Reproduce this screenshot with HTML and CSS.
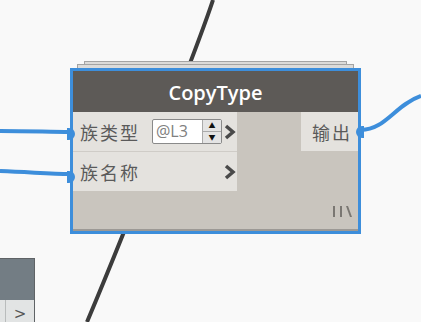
FILE: index.html
```html
<!DOCTYPE html>
<html lang="zh-CN">
<head>
    <meta charset="UTF-8">
    <title>CopyType</title>
    <link rel="stylesheet" href="styles.css">
</head>
<body>
    <div class="canvas">
        <svg class="wires" width="421" height="322" viewBox="0 0 421 322">
            <path d="M213 0 C200 40 130 220 87 322" stroke="#3c3c3c" stroke-width="4" fill="none"/>
            <path d="M0 131 C30 131 50 132 70 132" stroke="#3d8edb" stroke-width="4" fill="none"/>
            <path d="M0 171 C30 172 50 174 70 174" stroke="#3d8edb" stroke-width="4" fill="none"/>
            <path d="M361 130 C385 130 395 105 421 96" stroke="#3d8edb" stroke-width="4" fill="none"/>
        </svg>

        <div class="stack stack-1"></div>
        <div class="stack stack-2"></div>

        <div class="node">
            <div class="node-title">CopyType</div>
            <div class="node-body">
                <div class="inputs">
                    <div class="port-row">
                        <span class="port-name">族类型</span>
                        <div class="spinbox">
                            <span class="spin-value">@L3</span>
                            <div class="spin-buttons">
                                <span class="spin-btn">&#9650;</span>
                                <span class="spin-btn">&#9660;</span>
                            </div>
                        </div>
                        <svg class="chevron" width="12" height="16" viewBox="0 0 12 16">
                            <path d="M2 2 L9 8 L2 14" stroke="#4a4a4a" stroke-width="3.5" fill="none"/>
                        </svg>
                    </div>
                    <div class="port-row">
                        <span class="port-name">族名称</span>
                        <svg class="chevron" width="12" height="16" viewBox="0 0 12 16">
                            <path d="M2 2 L9 8 L2 14" stroke="#4a4a4a" stroke-width="3.5" fill="none"/>
                        </svg>
                    </div>
                </div>
                <div class="outputs">
                    <div class="out-row">输出</div>
                </div>
                <div class="lacing">
                    <span class="lace-bar"></span>
                    <span class="lace-bar"></span>
                    <span class="lace-bar slant"></span>
                </div>
            </div>
            <span class="dot in-1"></span>
            <span class="dot in-2"></span>
            <span class="dot out-1"></span>
        </div>

        <div class="mini-node">
            <div class="mini-head"></div>
            <div class="mini-row">
                <span class="mini-cell"></span>
                <span class="mini-arrow">&gt;</span>
            </div>
        </div>
    </div>
</body>
</html>
```

FILE: styles.css
```css
body {
    margin: 0;
    background: #f9f9f9;
    font-family: "Open Sans", "Noto Sans CJK SC", sans-serif;
}
.canvas {
    position: relative;
    width: 421px;
    height: 322px;
    overflow: hidden;
}
.wires {
    position: absolute;
    left: 0;
    top: 0;
}
.stack {
    position: absolute;
    background: #dcdbd9;
    border: 1px solid #a4a4a4;
    border-bottom: none;
    box-sizing: border-box;
}
.stack-1 {
    left: 84px;
    top: 61px;
    width: 263px;
    height: 4px;
}
.stack-2 {
    left: 77px;
    top: 64px;
    width: 277px;
    height: 5px;
}
.node {
    position: absolute;
    left: 70px;
    top: 68px;
    width: 291px;
    height: 166px;
    box-sizing: border-box;
    border: 3px solid #3d8edb;
    background: #c9c5be;
    display: flex;
    flex-direction: column;
}
.node-title {
    height: 41px;
    background: #5d5a57;
    color: #fff;
    font-weight: 600;
    font-size: 20px;
    display: flex;
    align-items: center;
    justify-content: center;
    padding-top: 2px;
    box-sizing: border-box;
}
.node-body {
    flex: 1;
    display: flex;
    justify-content: space-between;
    position: relative;
    border-bottom: 2px solid #9c9995;
}
.inputs {
    width: 164px;
    align-self: flex-start;
    background: #e4e2de;
}
.port-row {
    height: 39px;
    display: flex;
    align-items: center;
    padding-left: 7px;
    border-bottom: 1px solid #cfccc7;
    font-family: "Noto Sans CJK SC", sans-serif;
}
.port-row:last-child {
    border-bottom: none;
}
.port-name {
    font-size: 18px;
    color: #5a5a5a;
    letter-spacing: 2px;
}
.chevron {
    margin-left: auto;
    margin-right: 1px;
}
.spinbox {
    margin-left: 12px;
    width: 70px;
    height: 25px;
    box-sizing: border-box;
    border: 1px solid #8a8a8a;
    border-radius: 2px;
    background: #fff;
    display: flex;
}
.spin-value {
    flex: 1;
    font-family: "Open Sans", sans-serif;
    font-size: 16px;
    color: #808080;
    line-height: 23px;
    padding-left: 3px;
}
.spin-buttons {
    width: 18px;
    display: flex;
    flex-direction: column;
    border-left: 1px solid #aaa;
}
.spin-btn {
    flex: 1;
    background: #e4e4e4;
    font-size: 7px;
    line-height: 11px;
    text-align: center;
    color: #111;
}
.spin-btn + .spin-btn {
    border-top: 1px solid #aaa;
}
.outputs {
    width: 57px;
    align-self: flex-start;
}
.out-row {
    height: 39px;
    background: #e4e2de;
    font-family: "Noto Sans CJK SC", sans-serif;
    font-size: 18px;
    color: #5a5a5a;
    display: flex;
    align-items: center;
    justify-content: flex-end;
    padding-right: 6px;
    letter-spacing: 2px;
}
.lacing {
    position: absolute;
    right: 8px;
    bottom: 12px;
    display: flex;
    gap: 5px;
    align-items: flex-end;
}
.lace-bar {
    width: 2px;
    height: 11px;
    background: #7a7772;
}
.lace-bar.slant {
    transform: skewX(20deg);
    margin-left: 1px;
}
.dot {
    position: absolute;
    width: 8px;
    height: 12px;
    background: #3d8edb;
}
.in-1 {
    left: -6px;
    top: 57px;
    border-radius: 0 6px 6px 0;
}
.in-2 {
    left: -6px;
    top: 100px;
    border-radius: 0 6px 6px 0;
}
.out-1 {
    right: -6px;
    top: 55px;
    border-radius: 6px 0 0 6px;
}
.mini-node {
    position: absolute;
    left: -2px;
    top: 258px;
    width: 37px;
    height: 70px;
    border: 1px solid #5f6366;
    box-sizing: border-box;
    background: #e2e4e4;
}
.mini-head {
    height: 41px;
    background: #737d84;
}
.mini-row {
    display: flex;
    height: 28px;
}
.mini-cell {
    width: 6px;
    border-right: 1px solid #b9bcbc;
}
.mini-arrow {
    flex: 1;
    text-align: center;
    font-family: "DejaVu Sans", sans-serif;
    font-size: 15px;
    color: #555;
    line-height: 28px;
}
```
